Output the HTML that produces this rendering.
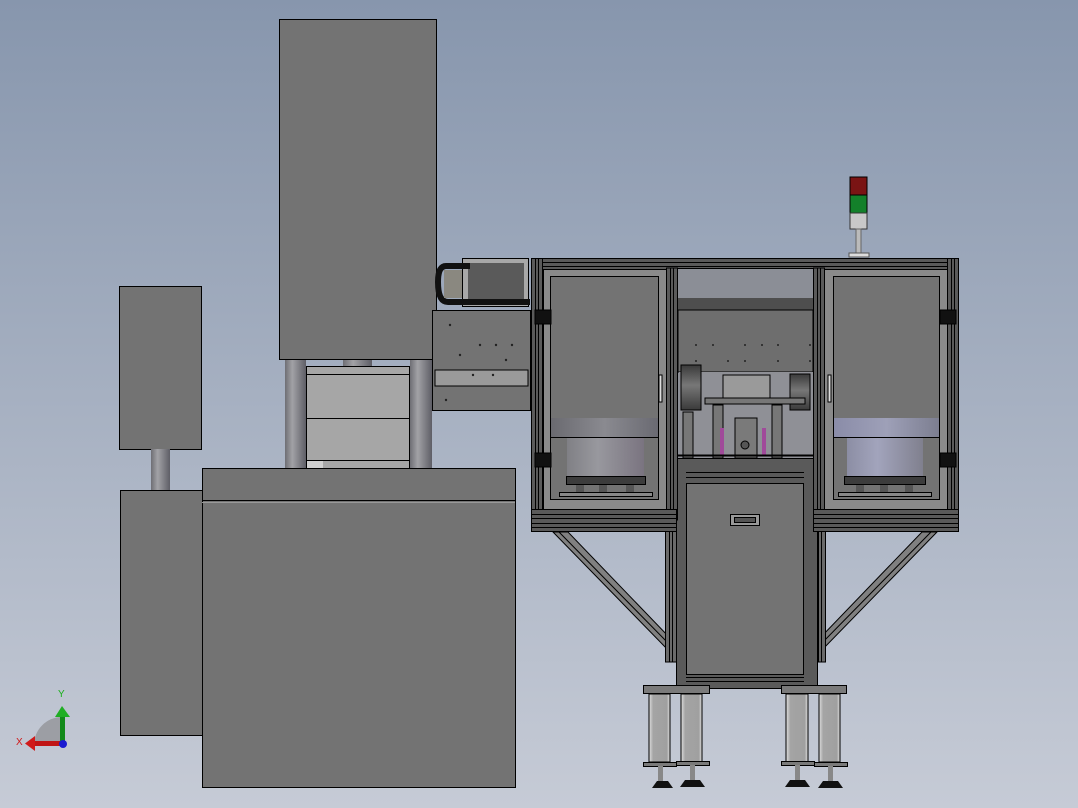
<!DOCTYPE html>
<html><head><meta charset="utf-8"><style>
html,body{margin:0;padding:0;width:1078px;height:808px;overflow:hidden}
svg{display:block}
</style></head><body>
<svg width="1078" height="808" viewBox="0 0 1078 808" xmlns="http://www.w3.org/2000/svg">
<defs>
<linearGradient id="bg" x1="0" y1="0" x2="0" y2="1"><stop offset="0" stop-color="#8796ad"/><stop offset="1" stop-color="#c6cbd6"/></linearGradient>
<linearGradient id="col" x1="0" y1="0" x2="1" y2="0"><stop offset="0" stop-color="#6e6e74"/><stop offset=".35" stop-color="#a2a2a6"/><stop offset="1" stop-color="#5e5e66"/></linearGradient>
<linearGradient id="cyl" x1="0" y1="0" x2="1" y2="0"><stop offset="0" stop-color="#808085"/><stop offset=".4" stop-color="#98989e"/><stop offset="1" stop-color="#7a7480"/></linearGradient>
<linearGradient id="cyl2" x1="0" y1="0" x2="1" y2="0"><stop offset="0" stop-color="#8c8ea4"/><stop offset=".4" stop-color="#a2a4bc"/><stop offset="1" stop-color="#80808e"/></linearGradient>
<linearGradient id="band" x1="0" y1="0" x2="1" y2="0"><stop offset="0" stop-color="#6a6a70"/><stop offset=".5" stop-color="#8a8a90"/><stop offset="1" stop-color="#6a6a72"/></linearGradient>
<linearGradient id="band2" x1="0" y1="0" x2="1" y2="0"><stop offset="0" stop-color="#8a8ca8"/><stop offset=".5" stop-color="#9ea0b8"/><stop offset="1" stop-color="#7c7e90"/></linearGradient>
<linearGradient id="leg" x1="0" y1="0" x2="1" y2="0"><stop offset="0" stop-color="#e0e0e0"/><stop offset=".2" stop-color="#a4a4a4"/><stop offset=".85" stop-color="#a0a0a0"/><stop offset="1" stop-color="#e0e0e0"/></linearGradient>
<linearGradient id="roll" x1="0" y1="0" x2="0" y2="1"><stop offset="0" stop-color="#3a3a3a"/><stop offset=".45" stop-color="#777"/><stop offset="1" stop-color="#3a3a3a"/></linearGradient>
</defs>
<rect width="1078" height="808" fill="url(#bg)"/>

<g stroke="#000" stroke-width="1">
<!-- left small box and post -->
<rect x="119.5" y="286.5" width="82" height="163" fill="#737373"/>
<rect x="151" y="449" width="19" height="41" fill="url(#col)" stroke="none"/>
<rect x="120.5" y="490.5" width="82" height="245" fill="#737373"/>

<!-- columns and middle block -->
<rect x="343" y="358" width="29" height="10" fill="url(#col)" stroke="none"/>
<rect x="285" y="359" width="21" height="110" fill="url(#col)" stroke="none"/>
<rect x="410" y="359" width="22" height="110" fill="url(#col)" stroke="none"/>
<rect x="306.5" y="366.5" width="103" height="102" fill="#a6a6a6"/>
<line x1="306" y1="374.5" x2="410" y2="374.5"/>
<line x1="306" y1="418.5" x2="410" y2="418.5"/>
<line x1="306" y1="460.5" x2="410" y2="460.5"/>
<rect x="307" y="461" width="16" height="7" fill="#d0d0d0" stroke="none"/>

<!-- tall box -->
<rect x="279.5" y="19.5" width="157" height="340" fill="#737373"/>

<!-- gantry -->
<rect x="432.5" y="310.5" width="98" height="100" fill="#737373"/>
<rect x="435" y="370" width="93" height="16" fill="#9a9a9a"/>
<rect x="462.5" y="258.5" width="66" height="48" fill="#a8a8a8"/>
<rect x="468" y="263" width="56" height="40" fill="#5a5a5a" stroke="none"/>
<path d="M470 266 H446 Q438 266 438 282 Q438 302 448 302 H530" fill="none" stroke="#111" stroke-width="6"/>
<rect x="444" y="270" width="18" height="28" fill="#8a8880" stroke="none"/>
</g>
<g fill="#222">
<circle cx="450" cy="325" r="1.2"/><circle cx="480" cy="345" r="1.2"/><circle cx="496" cy="345" r="1.2"/><circle cx="512" cy="345" r="1.2"/><circle cx="460" cy="355" r="1.2"/><circle cx="473" cy="375" r="1.2"/><circle cx="493" cy="375" r="1.2"/><circle cx="506" cy="360" r="1.2"/><circle cx="446" cy="400" r="1.2"/>
</g>

<!-- main lower box -->
<g stroke="#000">
<rect x="202.5" y="468.5" width="313" height="319" fill="#737373"/>
<line x1="202" y1="500.5" x2="515" y2="500.5"/>
<line x1="202" y1="502.5" x2="515" y2="502.5" stroke="#999"/>
</g>

<!-- RIGHT MACHINE -->
<g stroke="#000" stroke-width="1">
<!-- diagonals -->
<polygon points="553,532 568,532 670,638 670,652" fill="#808080"/>
<line x1="559" y1="532" x2="670" y2="645"/>
<polygon points="937,532 922,532 820,638 820,652" fill="#808080"/>
<line x1="931" y1="532" x2="820" y2="645"/>
<!-- vertical legs -->
<rect x="665.5" y="520" width="11" height="142" fill="#6a6a6a"/>
<line x1="669.5" y1="520" x2="669.5" y2="662"/><line x1="672.5" y1="520" x2="672.5" y2="662"/>
<rect x="814.5" y="520" width="11" height="142" fill="#6a6a6a"/>
<line x1="818.5" y1="520" x2="818.5" y2="662"/><line x1="821.5" y1="520" x2="821.5" y2="662"/>

<!-- lower cabinet -->
<rect x="676.5" y="458.5" width="141" height="230" fill="#5a5a5a"/>
<rect x="686.5" y="483.5" width="117" height="191" fill="#737373"/>
<line x1="686" y1="677.5" x2="804" y2="677.5"/><line x1="686" y1="681.5" x2="804" y2="681.5"/>
<line x1="686" y1="472.5" x2="804" y2="472.5"/><line x1="686" y1="477.5" x2="804" y2="477.5"/>
<rect x="730.5" y="514.5" width="29" height="11" fill="#999"/>
<rect x="734.5" y="517.5" width="21" height="5" fill="#555"/>

<!-- frame -->
<rect x="531.5" y="258.5" width="427" height="12" fill="#5a5a5a"/>
<line x1="531" y1="262.5" x2="958" y2="262.5"/><line x1="531" y1="266.5" x2="958" y2="266.5"/>
<rect x="531.5" y="258.5" width="11" height="262" fill="#5a5a5a"/>
<line x1="535.5" y1="258" x2="535.5" y2="520"/><line x1="538.5" y1="258" x2="538.5" y2="520"/>
<rect x="947.5" y="258.5" width="11" height="262" fill="#5a5a5a"/>
<line x1="951.5" y1="258" x2="951.5" y2="520"/><line x1="954.5" y1="258" x2="954.5" y2="520"/>
<rect x="666.5" y="268" width="11" height="252" fill="#5a5a5a"/>
<line x1="670.5" y1="268" x2="670.5" y2="520"/><line x1="673.5" y1="268" x2="673.5" y2="520"/>
<rect x="813.5" y="268" width="11" height="252" fill="#5a5a5a"/>
<line x1="817.5" y1="268" x2="817.5" y2="520"/><line x1="820.5" y1="268" x2="820.5" y2="520"/>

<!-- left door -->
<rect x="543.5" y="269.5" width="123" height="240" fill="#8a8a8a"/>
<rect x="550.5" y="276.5" width="108" height="223" fill="#737373"/>
<rect x="551" y="418" width="107" height="19" fill="url(#band)" stroke="none"/>
<line x1="551" y1="437.5" x2="658" y2="437.5"/>
<rect x="567" y="438" width="77" height="40" fill="url(#cyl)" stroke="none"/>
<rect x="566.5" y="476.5" width="79" height="8" fill="#3c3c3c"/>
<rect x="559.5" y="492.5" width="93" height="4" fill="#888"/>
<rect x="576" y="485" width="8" height="7" fill="#555" stroke="none"/><rect x="599" y="485" width="8" height="7" fill="#555" stroke="none"/><rect x="626" y="485" width="8" height="7" fill="#555" stroke="none"/>
<rect x="659" y="375" width="3" height="27" fill="#ddd"/>
<rect x="535" y="310" width="16" height="14" fill="#111"/>
<rect x="535" y="453" width="16" height="14" fill="#111"/>

<!-- right door -->
<rect x="824.5" y="269.5" width="123" height="240" fill="#8a8a8a"/>
<rect x="833.5" y="276.5" width="106" height="223" fill="#737373"/>
<rect x="834" y="418" width="105" height="19" fill="url(#band2)" stroke="none"/>
<line x1="834" y1="437.5" x2="939" y2="437.5"/>
<rect x="847" y="438" width="76" height="40" fill="url(#cyl2)" stroke="none"/>
<rect x="844.5" y="476.5" width="81" height="8" fill="#3c3c3c"/>
<rect x="838.5" y="492.5" width="93" height="4" fill="#888"/>
<rect x="856" y="485" width="8" height="7" fill="#555" stroke="none"/><rect x="880" y="485" width="8" height="7" fill="#555" stroke="none"/><rect x="905" y="485" width="8" height="7" fill="#555" stroke="none"/>
<rect x="828" y="375" width="3" height="27" fill="#ddd"/>
<rect x="940" y="310" width="16" height="14" fill="#111"/>
<rect x="940" y="453" width="16" height="14" fill="#111"/>

<!-- middle window -->
<rect x="677.5" y="268.5" width="136" height="190" fill="#8b8e96"/>
<rect x="678" y="298" width="135" height="12" fill="#4e4e4e" stroke="none"/>
<rect x="678" y="310" width="135" height="62" fill="#6e6e6e"/>
<rect x="679" y="372" width="134" height="86" fill="#8f9096" stroke="none"/>
<rect x="681" y="365" width="20" height="45" fill="url(#roll)"/>
<rect x="790" y="374" width="20" height="36" fill="url(#roll)"/>
<rect x="723" y="375" width="47" height="25" fill="#9a9a9a"/>
<rect x="705" y="398" width="100" height="6" fill="#777"/>
<rect x="683" y="412" width="10" height="46" fill="#777"/>
<rect x="713" y="405" width="10" height="53" fill="#777"/>
<rect x="772" y="405" width="10" height="53" fill="#777"/>
<rect x="735" y="418" width="22" height="40" fill="#7a7a7a"/>
<rect x="720" y="428" width="4" height="28" fill="#a04a9a" stroke="none"/>
<rect x="762" y="428" width="4" height="28" fill="#a04a9a" stroke="none"/>
<circle cx="745" cy="445" r="4" fill="#555"/>
<line x1="678" y1="455.5" x2="813" y2="455.5" stroke-width="2"/>
</g>
<g fill="#222">
<circle cx="696" cy="345" r="1"/><circle cx="713" cy="345" r="1"/><circle cx="745" cy="345" r="1"/><circle cx="762" cy="345" r="1"/><circle cx="778" cy="345" r="1"/><circle cx="810" cy="345" r="1"/>
<circle cx="696" cy="361" r="1"/><circle cx="728" cy="361" r="1"/><circle cx="745" cy="361" r="1"/><circle cx="778" cy="361" r="1"/><circle cx="810" cy="361" r="1"/>
</g>

<!-- bottom rail -->
<g stroke="#000">
<rect x="531.5" y="509.5" width="145" height="22" fill="#5a5a5a"/>
<line x1="531" y1="514.5" x2="676" y2="514.5"/><line x1="531" y1="518.5" x2="676" y2="518.5"/><line x1="531" y1="523.5" x2="676" y2="523.5"/><line x1="531" y1="527.5" x2="676" y2="527.5"/>
<rect x="813.5" y="509.5" width="145" height="22" fill="#5a5a5a"/>
<line x1="813" y1="514.5" x2="958" y2="514.5"/><line x1="813" y1="518.5" x2="958" y2="518.5"/><line x1="813" y1="523.5" x2="958" y2="523.5"/><line x1="813" y1="527.5" x2="958" y2="527.5"/>

<!-- feet -->
<rect x="643.5" y="685.5" width="66" height="8" fill="#7a7a7a"/>
<rect x="781.5" y="685.5" width="65" height="8" fill="#7a7a7a"/>
<rect x="649" y="694" width="21" height="68" fill="url(#leg)"/>
<rect x="681" y="694" width="21" height="68" fill="url(#leg)"/>
<rect x="786" y="694" width="22" height="68" fill="url(#leg)"/>
<rect x="819" y="694" width="21" height="68" fill="url(#leg)"/>
<rect x="643.5" y="762.5" width="33" height="4" fill="#7a7a7a"/>
<rect x="676.5" y="761.5" width="33" height="4" fill="#7a7a7a"/>
<rect x="781.5" y="761.5" width="33" height="4" fill="#7a7a7a"/>
<rect x="814.5" y="762.5" width="33" height="4" fill="#7a7a7a"/>
</g>
<g fill="#888"><rect x="658" y="766" width="5" height="15"/><rect x="690" y="765" width="5" height="15"/><rect x="795" y="765" width="5" height="15"/><rect x="828" y="766" width="5" height="15"/></g>
<g fill="#111"><polygon points="652,788 673,788 668,781 657,781"/><polygon points="680,787 705,787 700,780 685,780"/><polygon points="785,787 810,787 805,780 790,780"/><polygon points="818,788 843,788 838,781 823,781"/></g>

<!-- signal tower -->
<rect x="850" y="177" width="17" height="18" fill="#7a1414" stroke="#000"/>
<rect x="850" y="195" width="17" height="18" fill="#13802a" stroke="#000"/>
<rect x="850" y="213" width="17" height="16" fill="#c8c8c8" stroke="#333"/>
<rect x="856" y="229" width="5" height="24" fill="#bbb" stroke="#666"/>
<rect x="849" y="253" width="20" height="4" fill="#ddd" stroke="#555"/>

<!-- axis triad -->
<path d="M34 745 A28 28 0 0 1 62 717 V745 Z" fill="#9c9ea4"/>
<rect x="60" y="716" width="5" height="28" fill="#138a1a"/>
<polygon points="55,717 62,706 70,717" fill="#1fae24"/>
<rect x="34" y="741" width="28" height="5" fill="#c01515"/>
<polygon points="35,736 25,743.5 35,751" fill="#d01a1a"/>
<circle cx="63" cy="744" r="4" fill="#1a1ad0"/>
<text x="58" y="697" font-family="Liberation Sans, sans-serif" font-size="10" fill="#1ab01a">Y</text>
<text x="16" y="745" font-family="Liberation Sans, sans-serif" font-size="10" fill="#d01a1a">X</text>
</svg>
</body></html>
